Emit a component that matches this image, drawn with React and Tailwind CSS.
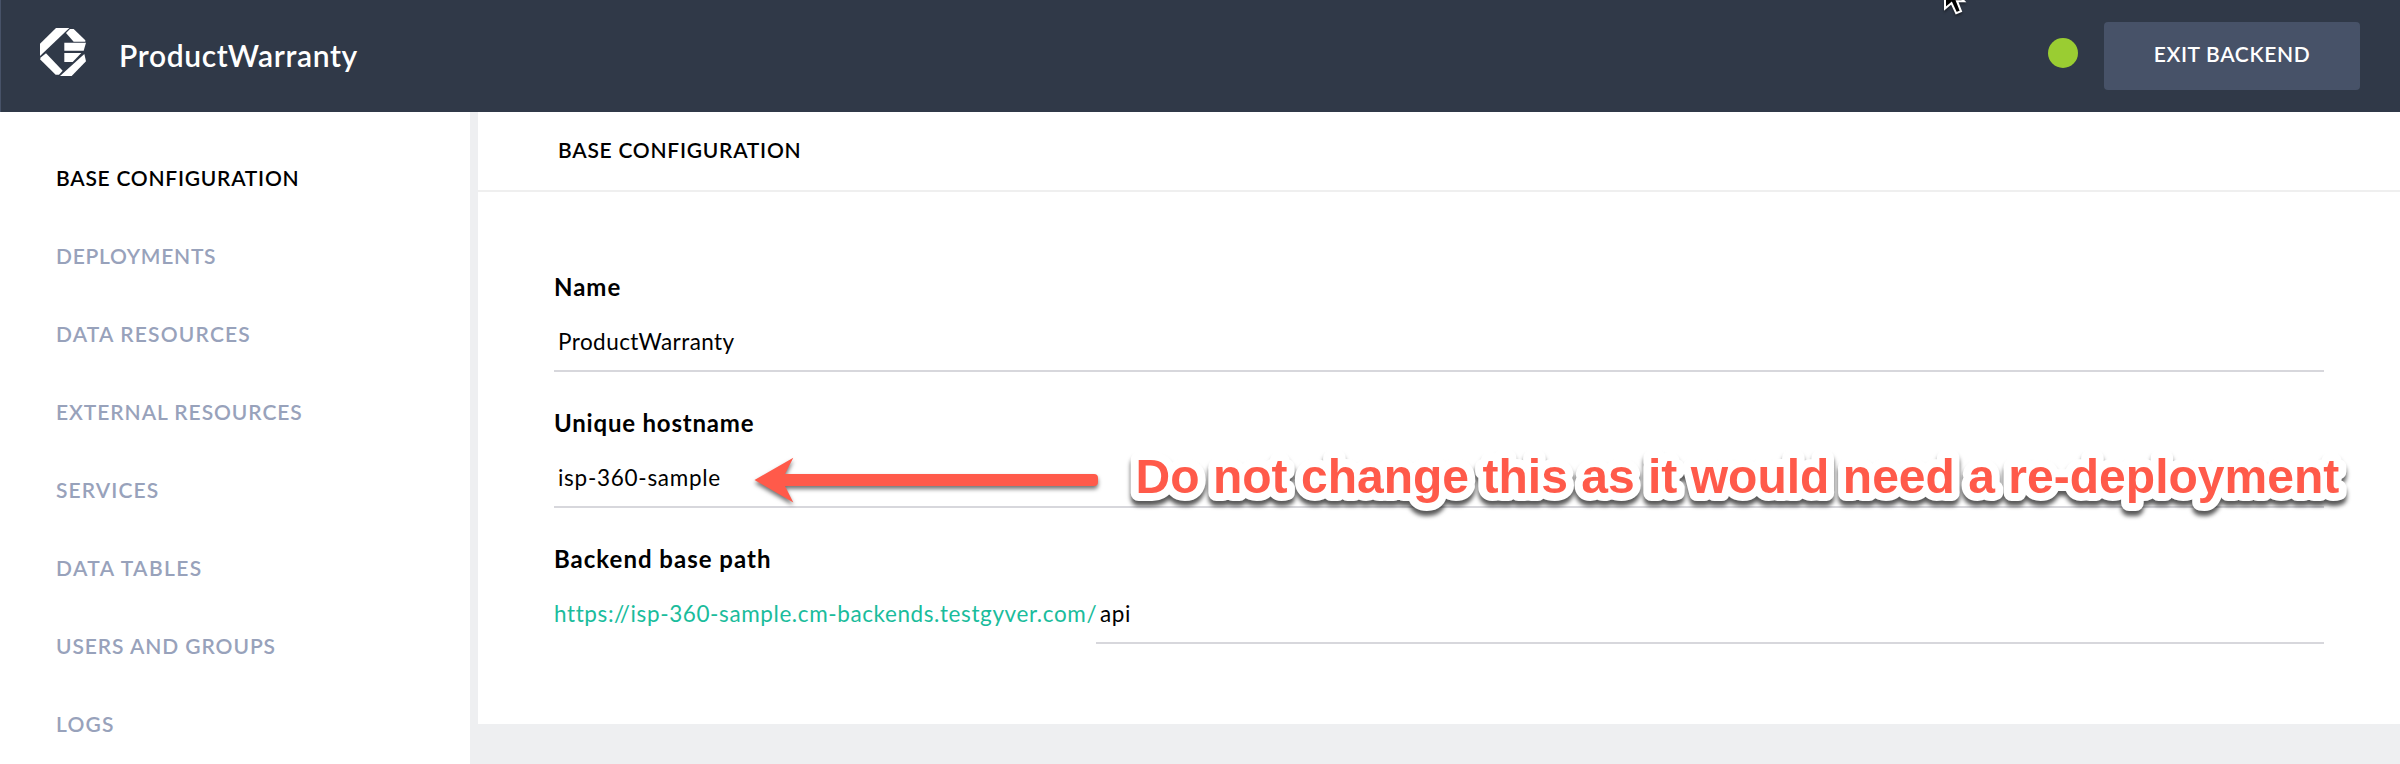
const NAV_ITEMS = [
  { label: 'BASE CONFIGURATION', className: 'text-black font-semibold tracking-[0.75px]' },
  { label: 'DEPLOYMENTS', className: 'text-[#98a2bb] font-semibold tracking-[0.72px]' },
  { label: 'DATA RESOURCES', className: 'text-[#98a2bb] font-semibold tracking-[1.18px]' },
  { label: 'EXTERNAL RESOURCES', className: 'text-[#98a2bb] font-semibold tracking-[0.94px]' },
  { label: 'SERVICES', className: 'text-[#98a2bb] font-semibold tracking-[1.1px]' },
  { label: 'DATA TABLES', className: 'text-[#98a2bb] font-semibold tracking-[1.38px]' },
  { label: 'USERS AND GROUPS', className: 'text-[#98a2bb] font-semibold tracking-[0.92px]' },
  { label: 'LOGS', className: 'text-[#98a2bb] font-semibold tracking-[1.2px]' },
];

function Logo() {
  return (
    <svg className="h-12 w-[46px]" viewBox="0 0 138 144" fill="#fff">
      <path d="M48 0H88L0 84V47Z" />
      <path d="M90 3H101L136 37V41H101L78 15Z" />
      <path d="M73 44H138L131 68H73Z" />
      <path d="M73 75H124L98 102H73Z" />
      <path d="M133 78L138 100L95 144H60Z" />
      <path d="M3 88L18 76L68 128L57 140H47L0 94Z" />
    </svg>
  );
}

function Cursor() {
  return (
    <svg
      className="absolute left-[1940px] top-0 h-[18px] w-[30px] drop-shadow-[0_2px_1px_rgba(0,0,0,0.4)]"
      viewBox="0 0 30 18"
    >
      <path d="M5 -18V8.5L11.5 3L16.2 13.2L21 11.3L17 1.2H24Z" fill="#000" stroke="#fff" strokeWidth="2" />
    </svg>
  );
}

function Header() {
  return (
    <header className="flex h-[112px] shrink-0 items-center border-l border-[#475268] bg-[#303948] pl-[39px] pr-10">
      <div className="pb-2">
        <Logo />
      </div>
      <h1 className="ml-[33px] pb-[3px] text-[30px] font-semibold leading-9 tracking-[0.65px] text-white">
        ProductWarranty
      </h1>
      <span className="mb-[6px] ml-auto h-[30px] w-[30px] rounded-full bg-[#9acd32]" />
      <button className="ml-[26px] h-[68px] w-64 rounded bg-[#475268] pb-1 text-[21px] font-semibold tracking-[0.65px] text-white">
        EXIT BACKEND
      </button>
    </header>
  );
}

function Sidebar() {
  return (
    <nav className="w-[470px] shrink-0 overflow-hidden bg-white pl-14 pt-[27px] text-[21px]">
      {NAV_ITEMS.map((item) => (
        <div key={item.label} className="h-[78px] leading-[78px]">
          <span className={item.className}>{item.label}</span>
        </div>
      ))}
    </nav>
  );
}

function Field({ label, labelClass, children }) {
  return (
    <div>
      <div className={'mb-[19px] h-[30px] text-[24px] font-bold leading-[30px] ' + labelClass}>{label}</div>
      <div className="flex h-[51px] whitespace-nowrap text-[22.5px] leading-[42px]">{children}</div>
    </div>
  );
}

function Annotation() {
  return (
    <>
      <svg
        className="absolute left-[750px] top-[450px] h-[64px] w-[356px] drop-shadow-[0_3px_2px_rgba(0,0,0,0.55)]"
        viewBox="750 450 356 64"
        fill="#ff5a4a"
      >
        <path d="M754.5 480L793.3 457.7L785 474H1094Q1098 474 1098 478V482Q1098 486 1094 486H785L793.3 502.5Z" />
      </svg>
      <svg
        className="absolute left-[1120px] top-[440px] h-[90px] w-[1240px] drop-shadow-[0_5px_2px_rgba(0,0,0,0.65)]"
        viewBox="1120 440 1240 90"
      >
        <text
          x="1135.5"
          y="493"
          className="fill-[#ff5a4a] stroke-white stroke-[16px] font-['Liberation_Sans',sans-serif] text-[48px] font-bold tracking-[0.02px] [paint-order:stroke_fill] [stroke-linejoin:round]"
        >
          Do not change this as it would need a re-deployment
        </text>
      </svg>
    </>
  );
}

export default function App() {
  return (
    <div className="relative flex h-[764px] w-[2400px] flex-col overflow-hidden bg-[#eeeff1] font-['Lato',sans-serif] text-black">
      <Header />
      <div className="flex min-h-0 flex-1 gap-2">
        <Sidebar />
        <main className="h-[612px] flex-1 bg-white">
          <h2 className="h-20 border-b-2 border-[#efefef] pb-[2px] pl-20 text-[21px] font-semibold leading-[76px] tracking-[0.75px]">
            BASE CONFIGURATION
          </h2>
          <div className="flex flex-col gap-9 pl-[76px] pr-[76px] pt-20">
            <Field label="Name" labelClass="tracking-[1px]">
              <div className="flex-1 border-b-2 border-[#d7d7dc] pl-1 tracking-[0.44px]">ProductWarranty</div>
            </Field>
            <Field label="Unique hostname" labelClass="tracking-[0.8px]">
              <div className="flex-1 border-b-2 border-[#d7d7dc] pl-1 tracking-[0.72px]">isp-360-sample</div>
            </Field>
            <Field label="Backend base path" labelClass="tracking-[1px]">
              <div className="w-[542px] shrink-0 text-[#1abc9c] tracking-[0.6px]">
                https://isp-360-sample.cm-backends.testgyver.com/
              </div>
              <div className="flex-1 border-b-2 border-[#d7d7dc] pl-1 tracking-[0.6px]">api</div>
            </Field>
          </div>
        </main>
      </div>
      <Cursor />
      <Annotation />
    </div>
  );
}
